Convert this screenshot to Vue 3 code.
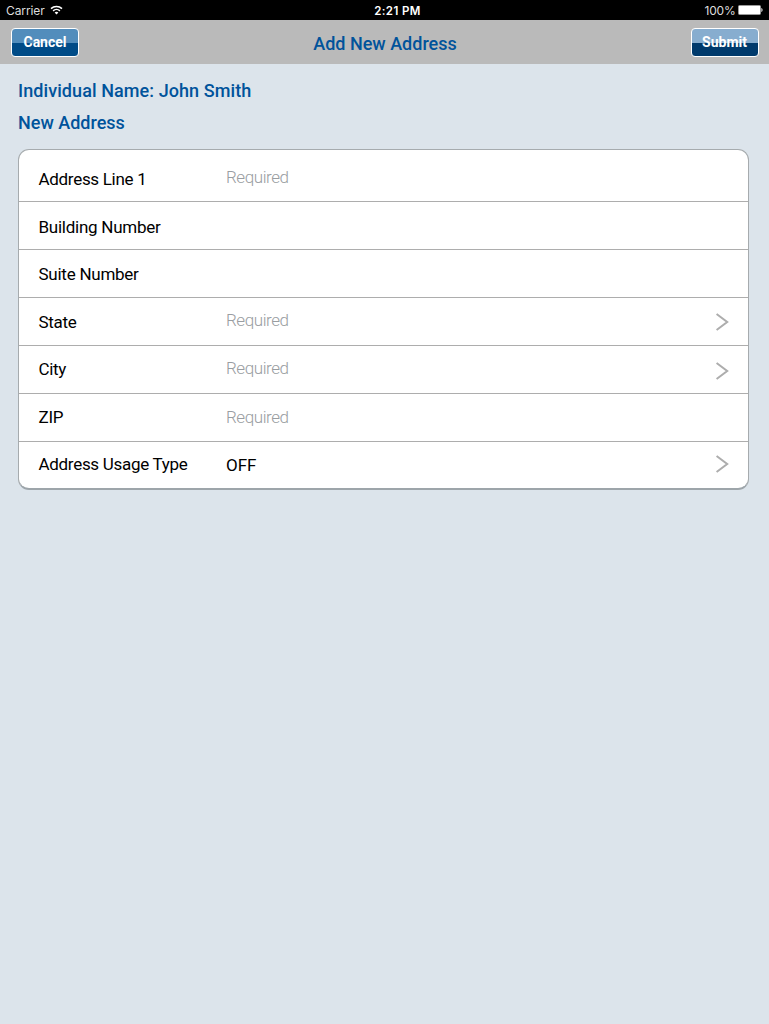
<script setup>
const rows = [
  { key: 'line', label: 'Address Line 1', hint: 'Required' },
  { key: 'building', label: 'Building Number' },
  { key: 'suite', label: 'Suite Number' },
  { key: 'state', label: 'State', hint: 'Required', more: true },
  { key: 'city', label: 'City', hint: 'Required', more: true },
  { key: 'zip', label: 'ZIP', hint: 'Required' },
  { key: 'usage', label: 'Address Usage Type', value: 'OFF', more: true },
]
</script>

<template>
  <div class="screen">
    <div class="status">
      <div class="side">
        <span class="carrier">Carrier</span>
        <svg class="wifi" width="13" height="10" viewBox="0 0 13 10">
          <path d="M1 3.6C4 .7 9 .7 12 3.6M3.1 5.9C5 4.1 8 4.1 9.9 5.9" fill="none" stroke="#fff" stroke-width="1.5" />
          <path d="M4.6 7.4C5.6 6.4 7.4 6.4 8.4 7.4L6.5 9.4Z" fill="#fff" />
        </svg>
      </div>
      <span class="time">2:21 PM</span>
      <div class="side end">
        <span class="percent">100%</span>
        <svg class="battery" width="25" height="10" viewBox="0 0 25 10">
          <rect x=".5" y=".5" width="22" height="9" rx="1" fill="#fff" stroke="#999" />
          <path d="M23.3 3C25 3.4 25 6.6 23.3 7Z" fill="#ddd" />
        </svg>
      </div>
    </div>
    <header class="nav">
      <button class="btn cancel">Cancel</button>
      <h1 class="title">Add New Address</h1>
      <button class="btn submit">Submit</button>
    </header>
    <main class="content">
      <h2 class="heading person">Individual Name: John Smith</h2>
      <h2 class="heading section">New Address</h2>
      <div class="card">
        <div v-for="row in rows" :key="row.key" class="row" :class="row.key">
          <span class="label">{{ row.label }}</span>
          <span class="value" :class="{ hint: row.hint }">{{ row.hint || row.value }}</span>
          <svg v-if="row.more" class="chevron" width="14" height="20" viewBox="0 0 14 20">
            <path d="M1.6 2L12.2 10L1.6 18" fill="none" stroke="#adadad" stroke-width="2" />
          </svg>
        </div>
      </div>
    </main>
  </div>
</template>

<style>
body { background: #dce4eb; }
</style>

<style scoped>
.screen {
  width: 769px;
  height: 1024px;
  background: #dce4eb;
  font-family: Roboto, "Liberation Sans", sans-serif;
  overflow: hidden;
}
.status {
  display: flex;
  height: 20px;
  line-height: 21px;
  padding: 0 6px;
  box-sizing: border-box;
  background: #000;
  color: #fff;
  font-family: Inter, "Liberation Sans", sans-serif;
  font-size: 12px;
  white-space: nowrap;
}
.side {
  display: flex;
  flex: 1;
  align-items: center;
}
.end { justify-content: flex-end; }
.carrier {
  color: #ddd;
  letter-spacing: -0.1px;
}
.wifi { margin-left: 5px; }
.time {
  font-size: 11.5px;
  font-weight: 600;
  letter-spacing: 0.4px;
  line-height: 22px;
  padding-left: 26px;
}
.percent {
  color: #ddd;
  letter-spacing: -0.2px;
}
.battery { margin-left: 2.5px; }
.nav {
  display: flex;
  align-items: center;
  justify-content: space-between;
  height: 44px;
  padding: 0 10px 0 11px;
  box-sizing: border-box;
  background: #bababa;
}
.btn {
  width: 68px;
  height: 29px;
  padding: 0;
  border: 1px solid #fff;
  border-radius: 4px;
  color: #fff;
  font: bold 14px/27px Roboto, sans-serif;
}
.cancel { background: linear-gradient(#528dbc 0 14px, #004b87 14px); }
.submit {
  padding-right: 1px;
  background: linear-gradient(#87adcf 0 14px, #003a6c 14px);
}
.title {
  margin: 3px 0 0;
  color: #00539b;
  font-size: 18px;
  font-weight: 500;
  line-height: 24px;
}
.content { padding: 0 20px 0 18px; }
.heading {
  margin: 0;
  color: #00539b;
  font-size: 18px;
  font-weight: 500;
  line-height: 24px;
}
.person {
  padding-top: 15px;
  letter-spacing: 0.08px;
}
.section { padding: 8px 0 14px; }
.card {
  border: 1px solid #a6abae;
  border-bottom: 2px solid #9da5aa;
  border-radius: 11px;
  background: #fff;
  overflow: hidden;
}
.row {
  display: grid;
  grid-template-columns: 187.5px 1fr 14px;
  align-items: start;
  height: 48px;
  box-sizing: border-box;
  padding: 0 19px 0 19.5px;
  border-bottom: 1px solid #adadad;
  color: #000;
  font-size: 17px;
  letter-spacing: -0.3px;
  line-height: 18px;
  white-space: nowrap;
}
.line { height: 52px; }
.usage {
  height: 46px;
  border-bottom: 0;
}
.label { margin-top: 14px; }
.line .label { margin-top: 20px; }
.building .label { margin-top: 16px; }
.suite .label, .state .label { margin-top: 15px; }
.building .label, .suite .label { letter-spacing: -0.25px; }
.usage .label { margin-top: 13px; }
.value { margin-top: 14px; }
.usage .value { letter-spacing: 0; }
.line .value { margin-top: 18px; }
.state .value, .city .value { margin-top: 13px; }
.value.hint {
  color: #999da1;
  font-weight: 300;
  letter-spacing: -0.43px;
}
.chevron { margin-top: 14px; }
.city .chevron { margin-top: 15px; }
.usage .chevron { margin-top: 12px; }
</style>
